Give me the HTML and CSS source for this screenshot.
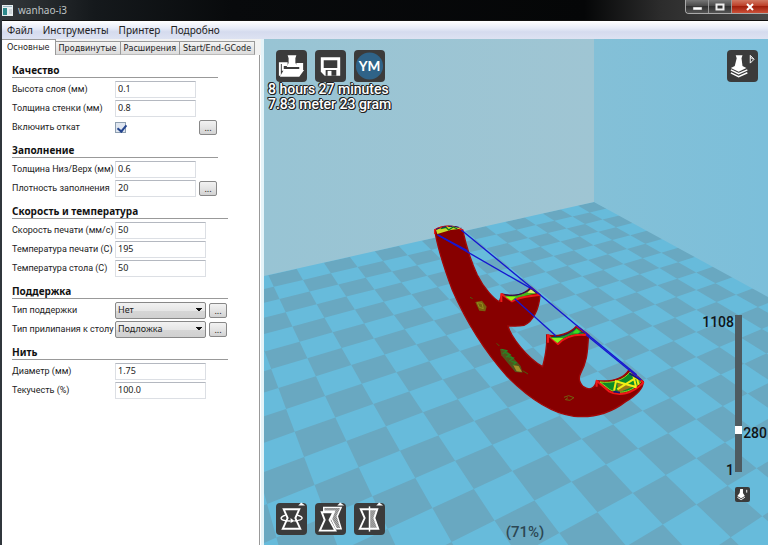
FILE: index.html
```html
<!DOCTYPE html>
<html lang="ru">
<head>
<meta charset="utf-8">
<title>wanhao-i3</title>
<link rel="stylesheet" href="styles.css">
</head>
<body>
<div class="window">
  <header class="titlebar">
    <svg class="app-icon" width="11" height="11" viewBox="0 0 11 11" aria-hidden="true"><rect width="11" height="11" fill="#e8eef0"/><rect x="1" y="1" width="9" height="1" fill="#9ab4c0"/><rect x="1" y="3" width="4" height="7" fill="#2f8a8c"/><rect x="7" y="4" width="3" height="5" fill="#cfd6da"/></svg>
    <h1 class="title">wanhao-i3</h1>
    <div class="window-buttons">
      <button class="wbtn" type="button" aria-label="Minimize"><svg width="12" height="10" viewBox="0 0 12 10"><rect x="2" y="5" width="9" height="3" fill="#fff" stroke="#555" stroke-width=".5"/></svg></button>
      <button class="wbtn" type="button" aria-label="Maximize"><svg width="12" height="10" viewBox="0 0 12 10"><path d="M2.500 2.500h7v5h-7z" fill="none" stroke="#eee" stroke-width="2"/></svg></button>
      <button class="wbtn wbtn-close" type="button" aria-label="Close"><svg width="12" height="10" viewBox="0 0 12 10"><path d="M3 2l6 6M9 2l-6 6" stroke="#fff" stroke-width="2"/></svg></button>
    </div>
  </header>
  <nav class="menubar">
    <a href="#">Файл</a><a href="#">Инструменты</a><a href="#">Принтер</a><a href="#">Подробно</a>
  </nav>
  <main class="content">
    <aside class="sidebar">
      <div class="tabs" role="tablist">
        <button class="tab tab-active" role="tab" type="button" aria-selected="true">Основные</button>
        <button class="tab" role="tab" type="button">Продвинутые</button>
        <button class="tab" role="tab" type="button">Расширения</button>
        <button class="tab" role="tab" type="button">Start/End-GCode</button>
      </div>
      <form class="settings">
        <section class="group">
          <h2>Качество</h2>
          <div class="row"><label for="layer">Высота слоя (мм)</label><input class="field" id="layer" type="text" value="0.1"></div>
          <div class="row"><label for="wall">Толщина стенки (мм)</label><input class="field" id="wall" type="text" value="0.8"></div>
          <div class="row"><label for="retract">Включить откат</label><input class="check" id="retract" type="checkbox" checked><button class="more" type="button">...</button></div>
        </section>
        <section class="group">
          <h2>Заполнение</h2>
          <div class="row"><label for="bottom">Толщина Низ/Верх (мм)</label><input class="field" id="bottom" type="text" value="0.6"></div>
          <div class="row"><label for="density">Плотность заполнения</label><input class="field" id="density" type="text" value="20"><button class="more" type="button">...</button></div>
        </section>
        <section class="group group-wide">
          <h2>Скорость и температура</h2>
          <div class="row"><label for="speed">Скорость печати (мм/с)</label><input class="field" id="speed" type="text" value="50"></div>
          <div class="row"><label for="temp">Температура печати (C)</label><input class="field" id="temp" type="text" value="195"></div>
          <div class="row"><label for="bed">Температура стола (C)</label><input class="field" id="bed" type="text" value="50"></div>
        </section>
        <section class="group group-wide">
          <h2>Поддержка</h2>
          <div class="row"><label for="support">Тип поддержки</label><select class="field" id="support"><option>Нет</option></select><button class="more" type="button">...</button></div>
          <div class="row"><label for="adhesion">Тип прилипания к столу</label><select class="field" id="adhesion"><option>Подложка</option></select><button class="more" type="button">...</button></div>
        </section>
        <section class="group group-wide">
          <h2>Нить</h2>
          <div class="row"><label for="diameter">Диаметр (мм)</label><input class="field" id="diameter" type="text" value="1.75"></div>
          <div class="row"><label for="flow">Текучесть (%)</label><input class="field" id="flow" type="text" value="100.0"></div>
        </section>
      </form>
    </aside>
    <section class="viewport">
      <svg class="scene" viewBox="264 39 504 506" preserveAspectRatio="xMinYMin slice" aria-hidden="true">
        <defs>
          <linearGradient id="wallL" x1="0" y1="0" x2="1" y2="0"><stop offset="0" stop-color="#98c4d4"/><stop offset="1" stop-color="#9fc5d3"/></linearGradient>
          <linearGradient id="wallR" x1="0" y1="0" x2="1" y2="0"><stop offset="0" stop-color="#84c0d7"/><stop offset="1" stop-color="#7cbfda"/></linearGradient>
        </defs>
        <rect x="264" y="39" width="504" height="506" fill="#67bbdb"/>
        <path id="floor" fill="#69a8c1"/>
        <path d="M264 39H594V202L264 276Z" fill="url(#wallL)"/>
        <path d="M594 39H768V297L594 202Z" fill="url(#wallR)"/>
        <g transform="translate(264 180) scale(.3333)">
          <path d="M512 150C535 136 570 134 596 150C605 190 615 232 640 285C660 325 690 357 706 365L714 342C745 352 780 345 800 322L828 345C826 385 808 425 780 436C762 440 745 438 732 438C740 470 790 535 836 560C844 530 850 500 848 465C880 472 920 460 938 438L974 465C970 510 972 540 950 580C942 595 948 610 958 620C975 632 992 628 998 602C1040 606 1078 598 1096 568L1138 605C1138 625 1118 645 1085 665C1040 700 985 714 930 709C860 700 790 650 730 590C650 500 600 410 565 330C535 250 520 200 512 150Z" fill="#870000" stroke="#a00808" stroke-width="4"/>
          <g fill="none" stroke="#f01818" stroke-width="6" stroke-linejoin="round">
            <path d="M512 162V150C535 136 570 134 598 152" stroke-width="4"/>
            <path d="M712 366V342L744 364C765 350 790 350 828 345L800 322"/>
            <path d="M852 488V465L882 492C905 468 935 460 974 466L938 438"/>
            <path d="M998 620V602L1035 634C1065 650 1105 642 1138 608L1096 568"/>
          </g>
          <path d="M516 150C540 138 570 136 590 146L560 150L520 162Z" fill="#c9d92a"/>
          <path d="M530 146l16-4 8 8 14-9 12 6" fill="none" stroke="#0a7a20" stroke-width="4"/>
          <path d="M516 148C540 138 570 136 592 144" fill="none" stroke="#151575" stroke-width="3" stroke-dasharray="12 7"/>
          <path d="M720 346C750 352 780 345 802 328L818 340L764 352L742 362Z" fill="#45b81a"/>
          <path d="M724 350l32 0-14 12z" fill="#9cf018"/>
          <path d="M790 338l12-12 12 14z" fill="#dce86a"/>
          <path d="M722 344C755 350 780 342 800 326l20 14" fill="none" stroke="#10106a" stroke-width="3"/>
          <path d="M856 470C890 474 920 462 938 444L962 462C925 458 900 472 882 488Z" fill="#25a025"/>
          <path d="M862 474l36 0-18 15z" fill="#8cf01c"/>
          <path d="M926 460l12-14 14 14z" fill="#38dc20"/>
          <path d="M868 470C895 472 920 460 936 444M944 460l18-4" fill="none" stroke="#163068" stroke-width="3"/>
          <path d="M1008 606C1045 610 1078 602 1098 576L1130 606C1105 636 1065 645 1036 628Z" fill="#0b8b28" stroke="#8de01c" stroke-width="3"/>
          <path d="M1060 610l58 6-56 22z" fill="#9b7c18"/>
          <path d="M1050 634l6-30 62 18M1060 628l58-36 6 22M1108 586l8 34" fill="none" stroke="#f1ee16" stroke-width="6"/>
          <path d="M1048 634l20 4M1096 580l34 20" stroke="#17177a" stroke-width="5"/>
          <path d="M634 366l20-4 14 18-4 14-18-2z" fill="#76600e"/>
          <path d="M640 368l14 2 4 16-12-4z" fill="none" stroke="#a3a326" stroke-width="2"/>
          <path d="M708 506l22 8 40 44 6 20-22-2-42-50z" fill="#54521c"/>
          <path d="M712 508l16 4-12 10M724 518l14 6-12 8M732 530l16 4-12 9M742 544l14 4-10 8" fill="none" stroke="#2a8424" stroke-width="4"/>
          <path d="M748 556l16 2 10 18-16-2z" fill="#a19028"/>
          <path d="M698 490l8 8M776 572l16 10M618 352l8 4" stroke="#4a5c0c" stroke-width="3"/>
          <path d="M900 652l14-5 16 6-12 8-14-2 8-6" fill="none" stroke="#71620e" stroke-width="3"/>
          <g fill="none" stroke="#1616d0" stroke-width="4">
            <path d="M520 164L802 326"/><path d="M592 150L804 324L940 438L1118 584"/>
            <path d="M610 212L524 166M752 356L876 468"/><path d="M966 464L1132 600"/>
          </g>
        </g>
      </svg>

      <div class="toolbar toolbar-top">
        <button class="tool" type="button" aria-label="Load"><svg viewBox="0 0 32 32"><path d="M12 5h9l-1 3v5l3 4H11l2-4V8z" fill="#fff"/><path d="M4 26V13h7v2H7v5h18v-4h-3v-2h5v6" fill="none" stroke="#fff" stroke-width="2"/><path d="M4 27l4-7h21l-5 7z" fill="#fff"/></svg></button>
        <button class="tool" type="button" aria-label="Save"><svg viewBox="0 0 32 32"><path d="M6 7h20v19H10l-4-4z" fill="#fff"/><path d="M9 10h14v8H9zM11 20h11v6H11z" fill="#3b3b3b"/><path d="M13 21h4v5h-4z" fill="#fff"/></svg></button>
        <button class="tool" type="button" aria-label="YouMagine"><svg viewBox="0 0 32 32"><circle cx="16" cy="16" r="14" fill="#2f6388"/><text class="ym" x="16" y="21" text-anchor="middle">YM</text></svg></button>
      </div>
      <p class="stats">8 hours 27 minutes<br>7.83 meter 23 gram</p>
      <button class="tool view-mode" type="button" aria-label="View mode"><svg viewBox="0 0 32 32"><path d="M9 5h7l-1 3 1 8 4 2-8 4-8-4 4-2 2-8z" fill="#fff"/><path d="M4 20l8 4 9-4M4 23l8 4 9-4" fill="none" stroke="#fff" stroke-width="1.500"/><path d="M24 5l4 4-4 4zM24 7l3 2" fill="none" stroke="#fff"/></svg></button>

      <span class="layer-max">1108</span>
      <input class="layers" type="range" min="1" max="1108" value="280" aria-label="Layer">
      <span class="layer-now">280</span>
      <span class="layer-min">1</span>
      <button class="tool tool-small" type="button" aria-label="Layers"><svg viewBox="0 0 32 32"><path d="M11 4h6v9l4 6-8 5-8-5 5-6z" fill="#fff"/><path d="M5 22l8 5 8-5M25 6v6" fill="none" stroke="#fff" stroke-width="2"/></svg></button>

      <div class="toolbar toolbar-bottom">
        <button class="tool" type="button" aria-label="Rotate"><svg viewBox="0 0 32 32"><path d="M23 2l3-3 4 3z" fill="#fff"/><path d="M8 6h16l-4 9 5 11H7l5-11z" fill="none" stroke="#fff" stroke-width="2"/><path d="M10 12c-7 2-7 6 5 6M22 12c7 2 7 5-3 6" fill="none" stroke="#fff" stroke-width="1.500"/><path d="M15 15l4 3-4 2z" fill="#fff"/></svg></button>
        <button class="tool" type="button" aria-label="Scale"><svg viewBox="0 0 32 32"><defs><pattern id="hatch" width="2" height="2" patternUnits="userSpaceOnUse"><rect width="2" height="2" fill="#555"/><path d="M0 0h1v1H0zM1 1h1v1H1z" fill="#ddd"/></pattern></defs><path d="M23 2l3-3 4 3z" fill="#fff"/><path d="M9 8V4h18l-4 9 4 13h-5l-5-10 3-8z" fill="url(#hatch)" stroke="#fff" stroke-width="1.500"/><path d="M7 9h12l-4 8 6 11H5l5-11z" fill="#3b3b3b" stroke="#fff" stroke-width="2"/></svg></button>
        <button class="tool" type="button" aria-label="Mirror"><svg viewBox="0 0 32 32"><path d="M23 2l3-3 4 3z" fill="#fff"/><path d="M16 6h8l-3 9 5 11H16z" fill="url(#hatch)"/><path d="M7 6h17l-3 9 4 11H6l5-11z" fill="none" stroke="#fff" stroke-width="2"/><path d="M16 3v26" stroke="#fff" stroke-width="1.500"/></svg></button>
      </div>
      <span class="zoom">(71%)</span>
    </section>
  </main>
</div>
<script src="floor.js"></script>
</body>
</html>
```

FILE: styles.css
```css
* { box-sizing: border-box; }

body {
  margin: 0;
  font: 9px/12px "Noto Sans", "DejaVu Sans Condensed", sans-serif;
  color: #222;
}

button, input, select { font: inherit; color: inherit; }

.window {
  display: flex;
  flex-direction: column;
  min-height: 100vh;
  border-left: 2px solid #30363c;
}

.titlebar {
  display: flex;
  align-items: center;
  gap: 5px;
  height: 21px;
  border-bottom: 1px solid #111;
  background: linear-gradient(90deg, #34383b 0, #15191c 12%, #080a0c 30%, #050607 76%, #2c2c2c 86%, #484848);
}

.app-icon { flex: none; }

.title {
  flex: 1;
  margin: 0;
  font-size: 10px;
  font-weight: normal;
  color: #bfc3c5;
}

.window-buttons {
  display: flex;
  align-self: flex-start;
  height: 14px;
  border: 1px solid #aaa;
  border-width: 0 0 1px 1px;
  border-radius: 0 0 0 4px;
  overflow: hidden;
}

.wbtn {
  width: 23px;
  padding: 0;
  border: 0;
  border-right: 1px solid #999;
  background: linear-gradient(#777, #4a4a4a 45%, #303030 50%, #555);
}

.wbtn svg { display: block; margin: 0 auto; }

.wbtn-close {
  width: 36px;
  border-right: 0;
  background: linear-gradient(#d07862, #bd3f28 45%, #a01f0c 50%, #cc5038);
}

.menubar {
  display: flex;
  align-items: center;
  gap: 10px;
  height: 18px;
  padding-left: 5px;
  background: linear-gradient(#fff, #e8ecf8 40%, #d5dbee 60%, #dde2f2);
  font-size: 10px;
}

.menubar a { color: #222; text-decoration: none; }

.content { display: flex; flex: 1; }

.sidebar {
  flex: none;
  width: 262px;
  border-right: 3px solid #e4f3f8;
  background: #fff;
}

.tabs {
  display: flex;
  align-items: flex-end;
  height: 16px;
  background: #f2f2f2;
  font-family: "DejaVu Sans Condensed", "DejaVu Sans", sans-serif;
}

.tab {
  height: 14px;
  padding: 0 3px;
  border: 1px solid #999;
  border-left-width: 0;
  border-bottom-color: #bbb;
  background: linear-gradient(#f4f4f4, #dcdcdc);
  line-height: 12px;
  white-space: nowrap;
}

.tab-active {
  height: 16px;
  padding: 0 5px 2px;
  border-bottom: 0;
  background: #fff;
}

.settings {
  min-height: calc(100% - 16px);
  margin-right: 1px;
  padding: 2px 0 0 10px;
  border-right: 1px solid #999;
}

.group { width: 206px; padding-top: 7px; }
.group-wide { width: 216px; }

.group h2 {
  height: 14px;
  margin: 0 0 2px;
  border-bottom: 1px solid #999;
  font-size: 10px;
  line-height: 12px;
  font-weight: bold;
  color: #111;
}

.row {
  display: grid;
  grid-template-columns: 100px 81px 18px;
  column-gap: 3px;
  align-items: center;
  height: 18px;
  margin-bottom: 1px;
}

.group-wide .row { grid-template-columns: 100px 91px 18px; }

.row label {
  font-family: Roboto, sans-serif;
  white-space: nowrap;
}

.field {
  width: 100%;
  height: 17px;
  margin: 0;
  padding: 0 2px 2px;
  border: 1px solid #dcdfe4;
  border-top-color: #b4b8c0;
  border-radius: 0;
  background: #fff;
}

select.field {
  appearance: none;
  padding: 0 2px;
  border: 1px solid #888;
  border-radius: 2px;
  background:
    linear-gradient(to bottom right, #111 50%, transparent 51%) right 3px center / 3px 4px no-repeat,
    linear-gradient(to bottom left, #111 50%, transparent 51%) right 6px center / 3px 4px no-repeat,
    linear-gradient(#f2f2f2, #e6e6e6 50%, #d6d6d6 52%, #d0d0d0);
}

.check {
  appearance: none;
  width: 11px;
  height: 11px;
  margin: 0;
  border: 1px solid #8e9fb0;
  background: #dfe6f0;
}

.check:checked::after {
  content: "";
  display: block;
  width: 4px;
  height: 7px;
  margin: 0 0 0 3px;
  border: solid #24458e;
  border-width: 0 2px 2px 0;
  transform: rotate(40deg);
}

.more {
  height: 15px;
  padding: 0;
  border: 1px solid #888;
  border-radius: 2px;
  background: linear-gradient(#f2f2f2, #e4e4e4 50%, #d2d2d2);
  line-height: 9px;
}

.viewport {
  position: relative;
  flex: 1;
  overflow: hidden;
  background: #67bbdb;
  font-family: Roboto, sans-serif;
}

.scene { position: absolute; inset: 0; width: 100%; height: 100%; }

.toolbar { position: absolute; left: 12px; display: flex; gap: 8px; }
.toolbar-top { top: 11px; }
.toolbar-bottom { bottom: 10px; }

.tool {
  width: 31px;
  height: 32px;
  padding: 0;
  border: 0;
  border-radius: 4px;
  background: #3b3b3b;
}

.tool svg { display: block; width: 100%; height: 100%; overflow: visible; }

.ym { font: bold 14px Lato, sans-serif; fill: #fff; }

.view-mode { position: absolute; top: 11px; right: 10px; }

.tool-small {
  position: absolute;
  right: 18px;
  bottom: 43px;
  width: 15px;
  height: 15px;
  border-radius: 2px;
}

.stats {
  position: absolute;
  left: 4px;
  top: 43px;
  margin: 0;
  font-size: 14px;
  line-height: 15px;
  font-weight: 500;
  color: #fff;
  white-space: nowrap;
  text-shadow: -1px 0 #222, 1px 0 #222, 0 -1px #222, 0 1px #222, 1px 1px #222, -1px -1px #222;
}

.layers {
  position: absolute;
  right: 26px;
  bottom: 73px;
  width: 7px;
  height: 157px;
  margin: 0;
  appearance: none;
  writing-mode: vertical-lr;
  direction: rtl;
  background: #4d5b61;
}

.layers::-webkit-slider-thumb {
  appearance: none;
  width: 7px;
  height: 8px;
  background: #fff;
}

.layer-max, .layer-now, .layer-min, .zoom {
  position: absolute;
  font-size: 14px;
  line-height: 16px;
  font-weight: 500;
  color: #101518;
}

.layer-max { right: 34px; bottom: 215px; }
.layer-now { right: 1px; bottom: 104px; }
.layer-min { right: 34px; bottom: 67px; }

.zoom {
  left: 0;
  right: 0;
  bottom: 5px;
  padding-left: 18px;
  text-align: center;
  font-size: 15px;
  color: #2c4753;
}
```

FILE: floor.js
```js
// Perspective of the build plate: grid steps (s, t) to scene coordinates.
function project(s, t) {
  const w = 1 + 0.0309 * s - 0.0461 * t;
  const x = 264 + (328 + 120.8 * s + 21 * t) / w / 3;
  const y = 250 + (462 - 24.8 * s + 42.4 * t) / w / 3;
  return { w, text: x.toFixed(1) + " " + y.toFixed(1) };
}

const tiles = [];
for (let s = -14; s < 14; s++) {
  for (let t = -9; t < 20; t++) {
    if ((s + t) % 2 !== 0) continue;
    const corners = [project(s, t), project(s + 1, t), project(s + 1, t + 1), project(s, t + 1)];
    if (corners.some((c) => c.w < 0.12)) continue;
    tiles.push("M" + corners.map((c) => c.text).join("L") + "Z");
  }
}
document.getElementById("floor").setAttribute("d", tiles.join(""));
```
